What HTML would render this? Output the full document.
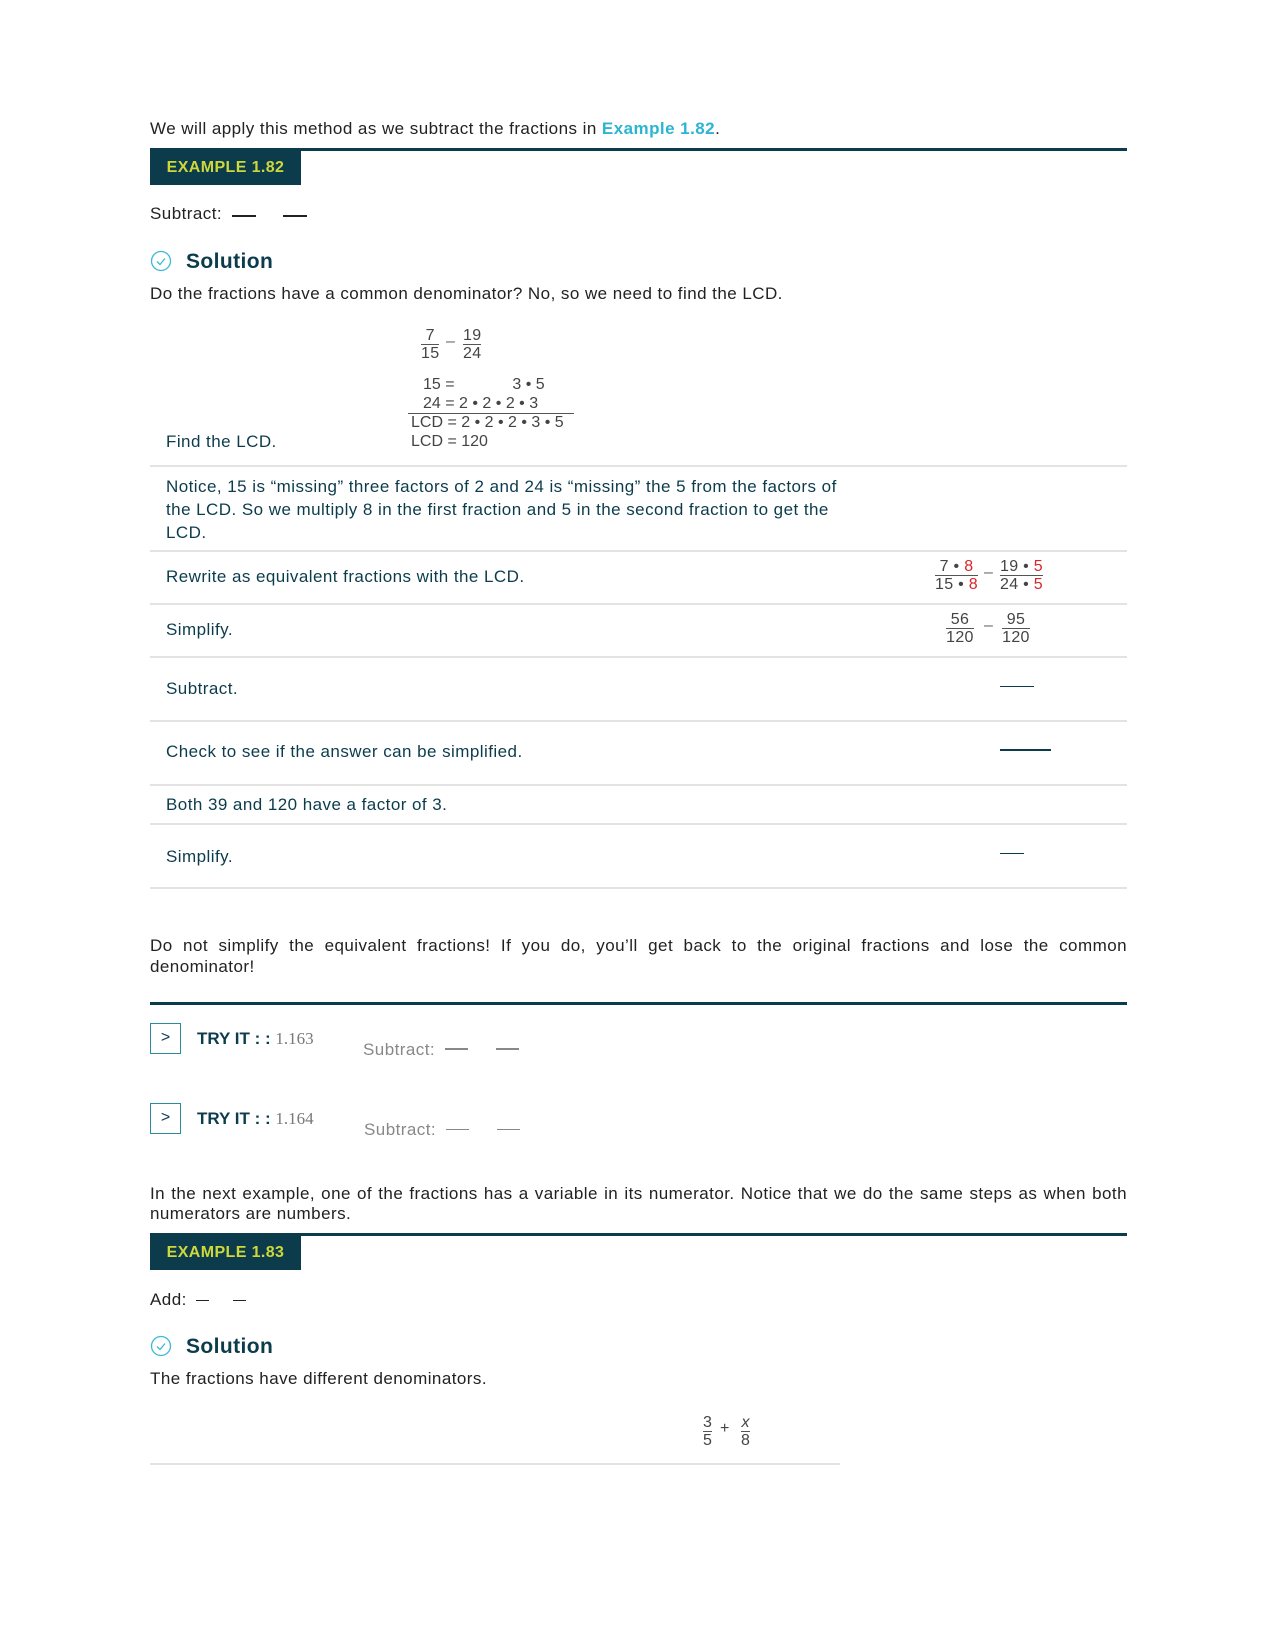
<!DOCTYPE html>
<html><head><meta charset="utf-8"><style>
body{margin:0;width:1275px;height:1651px;background:#fff;font-family:"Liberation Sans",sans-serif;color:#222;position:relative;overflow:hidden}
.a{position:absolute;white-space:nowrap}
.t{font-size:17px;letter-spacing:0.45px}
.teal{color:#0c3c4c}
.hr{position:absolute;height:1px;background:#e3e3e3}
.bar{position:absolute;height:3px;background:#0c3c4c}
.ex{position:absolute;background:#0c3c4c;color:#cfd83a;font-weight:bold;font-size:16px;letter-spacing:0.4px;line-height:34px;text-align:center}
.dash{position:absolute;height:2px;background:#222}
.fr{position:absolute;text-align:center;font-size:16px;color:#444;line-height:17px;letter-spacing:0.3px}
.fr .n{border-bottom:1px solid #555}
.red{color:#d9252a}
.m{position:absolute;font-size:16px;color:#444;line-height:18px;white-space:pre}
.box{position:absolute;width:31px;height:31px;border:1px solid #2a8c9c;box-sizing:border-box;text-align:center;line-height:28px;color:#0c3c4c;font-size:16px}
.ti{font-size:17px}
</style></head><body>
<div class="a t" style="left:150px;top:119px">We will apply this method as we subtract the fractions in <b style="color:#2cb5d2">Example 1.82</b>.</div>
<div class="bar" style="left:150px;top:148px;width:977px"></div>
<div class="ex" style="left:150px;top:151px;width:151px">EXAMPLE 1.82</div>
<div class="a t" style="left:150px;top:204px">Subtract:</div>
<div class="dash" style="left:232px;top:215px;width:24px"></div>
<div class="dash" style="left:283px;top:215px;width:24px"></div>
<svg class="a" style="left:150px;top:250px" width="22" height="22"><circle cx="11" cy="11" r="9.5" fill="none" stroke="#3cb9d6" stroke-width="1.3"/><path d="M7 11.5l3 3 5-6" fill="none" stroke="#3cb9d6" stroke-width="1.3"/></svg>
<div class="a teal" style="left:186px;top:250px;font-size:21px;font-weight:bold;letter-spacing:0.4px">Solution</div>
<div class="a t" style="left:150px;top:284px">Do the fractions have a common denominator? No, so we need to find the LCD.</div>
<div class="fr" style="left:421px;top:327px"><div class="n">7</div><div>15</div></div>
<div class="a" style="left:446px;top:333px;color:#666">–</div>
<div class="fr" style="left:463px;top:327px"><div class="n">19</div><div>24</div></div>
<div class="m" style="left:423px;top:376px">15 =             3 • 5</div>
<div class="m" style="left:423px;top:395px">24 = 2 • 2 • 2 • 3</div>
<div style="position:absolute;left:408px;top:413px;width:166px;height:1px;background:#555"></div>
<div class="m" style="left:411px;top:414px">LCD = 2 • 2 • 2 • 3 • 5</div>
<div class="m" style="left:411px;top:433px">LCD = 120</div>
<div class="a t teal" style="left:166px;top:432px">Find the LCD.</div>
<div class="hr" style="left:150px;top:465px;width:977px;height:2px"></div>
<div class="a t teal" style="left:166px;top:475px;line-height:23px;white-space:normal;width:692px">Notice, 15 is “missing” three factors of 2 and 24 is “missing” the 5 from the factors of the LCD. So we multiply 8 in the first fraction and 5 in the second fraction to get the LCD.</div>
<div class="hr" style="left:150px;top:550px;width:977px;height:2px"></div>
<div class="a t teal" style="left:166px;top:567px">Rewrite as equivalent fractions with the LCD.</div>
<div class="fr" style="left:935px;top:558px"><div class="n">7 • <span class="red">8</span></div><div>15 • <span class="red">8</span></div></div>
<div class="a" style="left:984px;top:564px;color:#666">–</div>
<div class="fr" style="left:1000px;top:558px"><div class="n">19 • <span class="red">5</span></div><div>24 • <span class="red">5</span></div></div>
<div class="hr" style="left:150px;top:603px;width:977px;height:2px"></div>
<div class="a t teal" style="left:166px;top:620px">Simplify.</div>
<div class="fr" style="left:946px;top:611px"><div class="n">&nbsp;56&nbsp;</div><div>120</div></div>
<div class="a" style="left:984px;top:617px;color:#666">–</div>
<div class="fr" style="left:1002px;top:611px"><div class="n">&nbsp;95&nbsp;</div><div>120</div></div>
<div class="hr" style="left:150px;top:656px;width:977px;height:2px"></div>
<div class="a t teal" style="left:166px;top:679px">Subtract.</div>
<div style="position:absolute;left:1000px;top:686px;width:34px;height:1px;background:#0c3c4c"></div>
<div class="hr" style="left:150px;top:720px;width:977px;height:2px"></div>
<div class="a t teal" style="left:166px;top:742px">Check to see if the answer can be simplified.</div>
<div style="position:absolute;left:1000px;top:749px;width:51px;height:2px;background:#0c3c4c"></div>
<div class="hr" style="left:150px;top:784px;width:977px;height:2px"></div>
<div class="a t teal" style="left:166px;top:795px">Both 39 and 120 have a factor of 3.</div>
<div class="hr" style="left:150px;top:823px;width:977px;height:2px"></div>
<div class="a t teal" style="left:166px;top:847px">Simplify.</div>
<div style="position:absolute;left:1000px;top:853px;width:24px;height:1px;background:#0c3c4c"></div>
<div class="hr" style="left:150px;top:887px;width:977px;height:2px"></div>
<div class="a t" style="left:150px;top:935px;white-space:normal;width:977px;text-align:justify;line-height:21px">Do not simplify the equivalent fractions! If you do, you’ll get back to the original fractions and lose the common denominator!</div>
<div class="bar" style="left:150px;top:1002px;width:977px"></div>
<div class="box" style="left:150px;top:1023px">&gt;</div>
<div class="a ti" style="left:197px;top:1029px"><b class="teal">TRY IT : :</b> <span style="color:#777;font-family:'Liberation Serif',serif">1.163</span></div>
<div class="a t" style="left:363px;top:1040px;color:#888">Subtract:</div>
<div style="position:absolute;left:445px;top:1048px;width:23px;height:2px;background:#888"></div>
<div style="position:absolute;left:496px;top:1048px;width:23px;height:2px;background:#888"></div>
<div class="box" style="left:150px;top:1103px">&gt;</div>
<div class="a ti" style="left:197px;top:1109px"><b class="teal">TRY IT : :</b> <span style="color:#777;font-family:'Liberation Serif',serif">1.164</span></div>
<div class="a t" style="left:364px;top:1120px;color:#888">Subtract:</div>
<div style="position:absolute;left:446px;top:1129px;width:23px;height:1px;background:#888"></div>
<div style="position:absolute;left:497px;top:1129px;width:23px;height:1px;background:#888"></div>
<div class="a t" style="left:150px;top:1184px;white-space:normal;width:977px;line-height:20px;text-align:justify">In the next example, one of the fractions has a variable in its numerator. Notice that we do the same steps as when both numerators are numbers.</div>
<div class="bar" style="left:150px;top:1233px;width:977px"></div>
<div class="ex" style="left:150px;top:1236px;width:151px">EXAMPLE 1.83</div>
<div class="a t" style="left:150px;top:1290px">Add:</div>
<div style="position:absolute;left:196px;top:1300px;width:13px;height:1px;background:#222"></div>
<div style="position:absolute;left:233px;top:1300px;width:13px;height:1px;background:#222"></div>
<svg class="a" style="left:150px;top:1335px" width="22" height="22"><circle cx="11" cy="11" r="9.5" fill="none" stroke="#3cb9d6" stroke-width="1.3"/><path d="M7 11.5l3 3 5-6" fill="none" stroke="#3cb9d6" stroke-width="1.3"/></svg>
<div class="a teal" style="left:186px;top:1335px;font-size:21px;font-weight:bold;letter-spacing:0.4px">Solution</div>
<div class="a t" style="left:150px;top:1369px">The fractions have different denominators.</div>
<div class="fr" style="left:703px;top:1414px"><div class="n">3</div><div>5</div></div>
<div class="a" style="left:720px;top:1420px;color:#444;font-size:16px">+</div>
<div class="fr" style="left:741px;top:1414px"><div class="n"><i>x</i></div><div>8</div></div>
<div class="hr" style="left:150px;top:1463px;width:690px;height:2px"></div>
</body></html>
